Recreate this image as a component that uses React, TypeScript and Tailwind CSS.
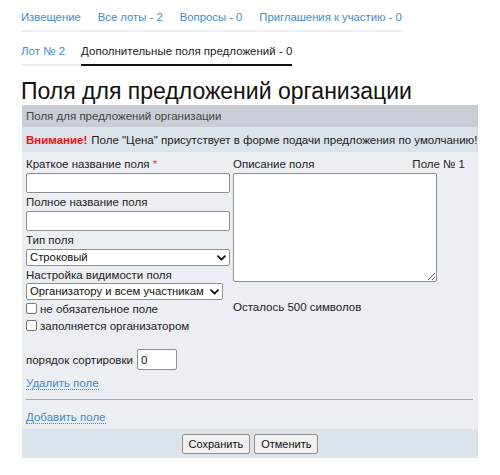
import { useState } from "react";

const NAV_TOP = ["Извещение", "Все лоты - 2", "Вопросы - 0", "Приглашения к участию - 0"];

function Chevron() {
  return (
    <svg
      width="9"
      height="6"
      viewBox="0 0 9 6"
      className="pointer-events-none absolute right-[4px] top-1/2 -translate-y-1/2"
    >
      <path d="M1 1.2 L4.5 4.6 L8 1.2" fill="none" stroke="#111" strokeWidth="1.8" strokeLinecap="round" strokeLinejoin="round" />
    </svg>
  );
}

function Select({ value, options, width }: { value: string; options: string[]; width: string }) {
  return (
    <div className={`relative ${width}`}>
      <select
        defaultValue={value}
        className="block h-[17px] w-full appearance-none rounded-[2px] border border-[#8f8f8f] bg-white pl-[3px] pr-[11px] text-[11.3px] leading-[15px] text-[#111]"
      >
        {options.map((o) => (
          <option key={o}>{o}</option>
        ))}
      </select>
      <Chevron />
    </div>
  );
}

function Check({ label }: { label: string }) {
  return (
    <label className="flex h-[17px] items-center gap-[3px]">
      <input
        type="checkbox"
        className="m-0 h-[11px] w-[11px] appearance-none rounded-[2px] border border-[#767676] bg-white"
      />
      <span>{label}</span>
    </label>
  );
}

export default function App() {
  const [text, setText] = useState("");

  return (
    <div
      className="min-h-[475px] bg-white text-[11.5px] leading-[14px] text-[#333]"
      style={{ fontFamily: '"Liberation Sans", Arial, sans-serif' }}
    >
      {/* top tabs */}
      <div className="ml-[21px] mt-[10px] flex w-fit gap-[17px] border-b-2 border-[#eee] pb-[5px] text-[11.3px] leading-[15px]">
        {NAV_TOP.map((item) => (
          <a key={item} className="text-[#428bca]">
            {item}
          </a>
        ))}
      </div>

      {/* lot tabs */}
      <div className="ml-[21px] mt-[12px] flex w-fit gap-[16px] border-b-2 border-[#eee] text-[11.5px] leading-[15px]">
        <a className="pb-[5px] text-[#428bca]">Лот № 2</a>
        <span className="-mb-[2px] border-b-2 border-[#111] pb-[5px] text-[#222]">
          Дополнительные поля предложений - 0
        </span>
      </div>

      <h1 className="ml-[21px] mb-[1px] mt-[12px] text-[23px] leading-[26px] font-normal text-[#111]">
        Поля для предложений организации
      </h1>

      {/* panel */}
      <div className="ml-[22px] w-[456px]">
        <div className="flex h-[22px] items-center bg-[#c9ced6] pl-[4px] text-[#444]">
          Поля для предложений организации
        </div>
        <div className="flex h-[25px] items-center whitespace-nowrap bg-[#dde3eb] pl-[4px] text-[#222]">
          <b className="mr-[4px] text-[#ee1111]">Внимание!</b>
          Поле "Цена" присутствует в форме подачи предложения по умолчанию!
        </div>

        <div className="bg-[#ebeef2] pl-[4px] pr-[5px] pt-[5px] pb-[5px] text-[#222]">
          <div className="flex">
            <div className="flex w-[204px] flex-col">
              <div>
                Краткое название поля <span className="text-[#e33]">*</span>
              </div>
              <input className="mt-[2px] h-[20px] rounded-[2px] border border-[#8f8f8f] bg-white" />
              <div className="mt-[2px]">Полное название поля</div>
              <input className="mt-[2px] h-[20px] rounded-[2px] border border-[#8f8f8f] bg-white" />
              <div className="mt-[2px]">Тип поля</div>
              <div className="mt-[2px]">
                <Select value="Строковый" options={["Строковый", "Числовой", "Дата"]} width="w-[204px]" />
              </div>
              <div className="mt-[2px]">Настройка видимости поля</div>
              <div className="mt-[1px]">
                <Select
                  value="Организатору и всем участникам"
                  options={["Организатору и всем участникам", "Только организатору"]}
                  width="w-[197px]"
                />
              </div>
              <Check label="не обязательное поле" />
              <Check label="заполняется организатором" />
            </div>

            <div className="ml-[3px] flex w-[232px] flex-col">
              <div className="flex justify-between">
                <span>Описание поля</span>
                <span>Поле № 1</span>
              </div>
              <textarea
                value={text}
                onChange={(e) => setText(e.target.value)}
                className="mt-[2px] h-[109px] w-[204px] rounded-[2px] border border-[#8f8f8f] bg-white"
              />
              <div className="mt-[18px]">Осталось {500 - text.length} символов</div>
            </div>
          </div>

          <div className="mt-[15px] flex items-center gap-[4px]">
            <span>порядок сортировки</span>
            <input
              defaultValue="0"
              className="h-[21px] w-[40px] rounded-[2px] border border-[#8f8f8f] bg-white px-[3px] text-[11.5px]"
            />
          </div>

          <div className="mt-[6px]">
            <a className="border-b border-dotted border-[#428bca] text-[#428bca]">Удалить поле</a>
          </div>

          <div className="mt-[9px] border-t border-[#a8a8a8]" />

          <div className="mt-[10px]">
            <a className="border-b border-dotted border-[#428bca] text-[#428bca]">Добавить поле</a>
          </div>
        </div>

        <div className="flex h-[29px] items-center justify-center gap-[4px] bg-[#dde3eb]">
          <button className="h-[20px] rounded-[2px] border border-[#8f8f8f] bg-[#efefef] px-[6px] text-[11px] text-[#111]">
            Сохранить
          </button>
          <button className="h-[20px] rounded-[2px] border border-[#8f8f8f] bg-[#efefef] px-[6px] text-[11px] text-[#111]">
            Отменить
          </button>
        </div>
      </div>
    </div>
  );
}
